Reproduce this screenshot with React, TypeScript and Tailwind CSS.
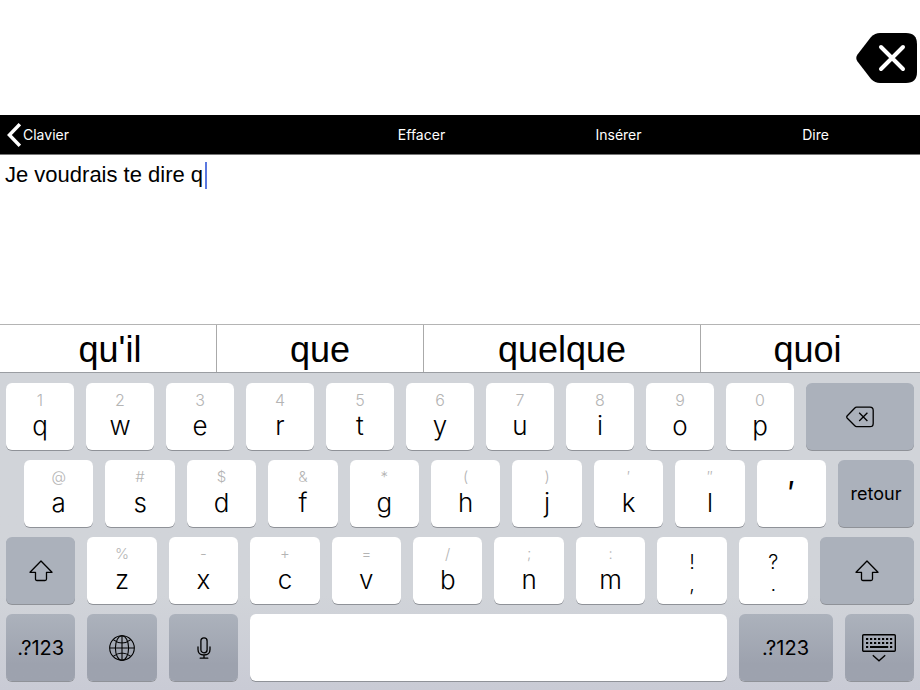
import type { ReactNode } from "react";

type KeyDef = { main: string; alt?: string };

const row1: KeyDef[] = [
  { alt: "1", main: "q" },
  { alt: "2", main: "w" },
  { alt: "3", main: "e" },
  { alt: "4", main: "r" },
  { alt: "5", main: "t" },
  { alt: "6", main: "y" },
  { alt: "7", main: "u" },
  { alt: "8", main: "i" },
  { alt: "9", main: "o" },
  { alt: "0", main: "p" },
];

const row2: KeyDef[] = [
  { alt: "@", main: "a" },
  { alt: "#", main: "s" },
  { alt: "$", main: "d" },
  { alt: "&", main: "f" },
  { alt: "*", main: "g" },
  { alt: "(", main: "h" },
  { alt: ")", main: "j" },
  { alt: "′", main: "k" },
  { alt: "″", main: "l" },
];

const row3: KeyDef[] = [
  { alt: "%", main: "z" },
  { alt: "-", main: "x" },
  { alt: "+", main: "c" },
  { alt: "=", main: "v" },
  { alt: "/", main: "b" },
  { alt: ";", main: "n" },
  { alt: ":", main: "m" },
];

const suggestions = [
  { word: "qu'il", size: "flex-[212] pl-1" },
  { word: "que", size: "flex-[206]" },
  { word: "quelque", size: "flex-[276]" },
  { word: "quoi", size: "flex-[213] pr-1.5" },
];

const keyBase =
  "flex h-[67px] min-w-0 flex-col items-center rounded-md shadow-[0_1px_0_#8f9298]";

function LetterKey({ def, size, small }: { def: KeyDef; size: string; small?: boolean }) {
  return (
    <button type="button" className={`${keyBase} ${size} bg-white pt-2`}>
      <span
        className={`h-[18px] font-light leading-[18px] text-[#b4b4b4] ${small ? "text-[15px]" : "text-base"}`}
      >
        {def.alt}
      </span>
      <span className="text-[26px] font-light leading-[34px] text-black">{def.main}</span>
    </button>
  );
}

function PunctuationKey({ top, bottom }: { top: string; bottom: string }) {
  return (
    <button
      type="button"
      className={`${keyBase} flex-[694] bg-white pt-3.5 text-xl font-light leading-[22px] text-black`}
    >
      <span>{top}</span>
      <span>{bottom}</span>
    </button>
  );
}

function ActionKey({
  size,
  label,
  lower,
  children,
}: {
  size: string;
  label?: string;
  lower?: boolean;
  children: ReactNode;
}) {
  return (
    <button
      type="button"
      aria-label={label}
      className={`${keyBase} ${size} justify-center text-black ${
        lower ? "bg-linear-to-b from-[#acb2bc] to-[#9da2ae] to-75%" : "bg-[#abb1bb]"
      }`}
    >
      {children}
    </button>
  );
}

function ShiftIcon() {
  return (
    <svg width="24" height="22" viewBox="0 0 24 22" fill="none" stroke="black" strokeWidth="1.3" strokeLinejoin="round">
      <path d="M12 1 L23 12.3 H17.5 V19 Q17.5 20.5 16 20.5 H8 Q6.5 20.5 6.5 19 V12.3 H1 Z" />
    </svg>
  );
}

function DeleteIcon() {
  return (
    <svg width="28" height="22" viewBox="0 0 28 22" fill="none" stroke="black" strokeWidth="1.3" strokeLinejoin="round">
      <path d="M10.5 1.2 H24 Q27.2 1.2 27.2 4.4 V17.4 Q27.2 20.6 24 20.6 H10.5 Q9.6 20.6 8.8 19.8 L1.3 12.2 Q0.2 11 1.3 9.8 L8.8 2 Q9.6 1.2 10.5 1.2 Z" />
      <path d="M13.2 6.8 L21.4 15 M21.4 6.8 L13.2 15" />
    </svg>
  );
}

function GlobeIcon() {
  return (
    <svg width="26" height="26" viewBox="0 0 26 26" fill="none" stroke="black" strokeWidth="1.1">
      <circle cx="13" cy="13" r="12.3" />
      <ellipse cx="13" cy="13" rx="6.6" ry="12.3" />
      <path d="M13 0.7 V25.3 M0.7 13 H25.3 M4.2 4.6 Q13 11.4 21.8 4.6 M4.2 21.4 Q13 14.6 21.8 21.4" />
    </svg>
  );
}

function MicIcon() {
  return (
    <svg width="14" height="22" viewBox="0 0 14 22" fill="none" stroke="black" strokeWidth="1.3" strokeLinecap="round">
      <rect x="3.9" y="0.8" width="6.2" height="15" rx="3.1" />
      <path d="M1 10 V12.5 Q1 18 7 18 Q13 18 13 12.5 V10 M7 18 V21 M3.2 21.2 H10.8" />
    </svg>
  );
}

function HideKeyboardIcon() {
  const keys = [4, 8, 12, 16, 20, 24, 28];
  return (
    <svg width="34" height="28" viewBox="0 0 34 28" fill="none" stroke="black">
      <rect x="0.7" y="0.7" width="32.6" height="16.6" rx="1" strokeWidth="1.4" />
      <g fill="black" stroke="none">
        {keys.map((x) => (
          <rect key={`a${x}`} x={x} y="4" width="2.2" height="2" />
        ))}
        {keys.map((x) => (
          <rect key={`b${x}`} x={x} y="8" width="2.2" height="2" />
        ))}
        <rect x="4" y="12" width="2.2" height="2" />
        <rect x="8" y="12" width="18.2" height="2" />
        <rect x="28" y="12" width="2.2" height="2" />
      </g>
      <path d="M10.8 21.3 L17 26.8 L23.2 21.3" strokeWidth="1.4" />
    </svg>
  );
}

export default function App() {
  return (
    <div className="flex min-h-screen flex-col bg-white font-['Inter','Liberation_Sans',sans-serif] text-black">
      <header className="flex h-[115px] items-center justify-end pr-[3px]">
        <button type="button" aria-label="Supprimer">
          <svg width="61" height="50" viewBox="0 0 61 50">
            <path
              d="M24 0 H50 Q61 0 61 11 V39 Q61 50 50 50 H24 Q19 50 15 46 L1.5 28.5 Q-1 25 1.5 21.5 L15 4 Q19 0 24 0 Z"
              fill="black"
            />
            <path d="M25 14 L47 36 M47 14 L25 36" stroke="white" strokeWidth="4" strokeLinecap="round" />
          </svg>
        </button>
      </header>

      <nav className="flex h-10 items-center border-b border-[#777] bg-black text-sm text-white">
        <div className="flex-[316] pl-[7px]">
          <button type="button" className="flex items-center gap-0.5">
            <svg width="14" height="24" viewBox="0 0 14 24" fill="none" stroke="white" strokeWidth="3.4">
              <path d="M12.8 1.2 L2.4 12 L12.8 22.8" />
            </svg>
            Clavier
          </button>
        </div>
        <button type="button" className="flex-[197]">Effacer</button>
        <button type="button" className="flex-[197]">Insérer</button>
        <button type="button" className="flex-[197]">Dire</button>
        <div className="flex-[6]" />
      </nav>

      <main className="relative flex flex-1 flex-col">
        <textarea
          aria-label="Message"
          defaultValue="Je voudrais te dire q"
          className="w-full flex-1 resize-none bg-transparent px-[5px] pt-2 font-['Liberation_Sans',Arial,sans-serif] text-[22px] leading-6 outline-none"
        />
        <span className="absolute left-[205px] top-[7px] h-[27px] w-0.5 bg-[#5a78e0]" />
      </main>

      <div className="flex h-[49px] divide-x divide-[#aaa] border-y border-t-[#b4b4b4] border-b-[#9a9da2] font-['Liberation_Sans',Arial,sans-serif] text-4xl">
        {suggestions.map((s) => (
          <button key={s.word} type="button" className={`${s.size} min-w-0 pt-0.5`}>
            {s.word}
          </button>
        ))}
      </div>

      <section
        aria-label="Clavier"
        className="flex flex-col gap-2.5 bg-linear-to-b from-[#d1d4d9] from-70% to-[#c9cbd5] px-1.5 pb-[9px] pt-2.5"
      >
        <div className="flex gap-3">
          {row1.map((k) => (
            <LetterKey key={k.main} def={k} size="flex-[68]" />
          ))}
          <ActionKey size="flex-[108]" label="Retour arrière">
            <DeleteIcon />
          </ActionKey>
        </div>

        <div className="flex gap-3 pl-[18px]">
          {row2.map((k) => (
            <LetterKey key={k.main} def={k} size="flex-[694]" small />
          ))}
          <button type="button" className={`${keyBase} flex-[694] bg-white pt-3.5 text-[32px] leading-10`}>
            ′
          </button>
          <ActionKey size="flex-[760]">
            <span className="text-lg">retour</span>
          </ActionKey>
        </div>

        <div className="flex gap-3">
          <ActionKey size="flex-[694]" label="Majuscule">
            <ShiftIcon />
          </ActionKey>
          {row3.map((k) => (
            <LetterKey key={k.main} def={k} size="flex-[694]" small />
          ))}
          <PunctuationKey top="!" bottom="," />
          <PunctuationKey top="?" bottom="." />
          <ActionKey size="flex-[940]" label="Majuscule">
            <ShiftIcon />
          </ActionKey>
        </div>

        <div className="flex gap-3">
          <ActionKey size="flex-[694]" lower>
            <span className="text-xl">.?123</span>
          </ActionKey>
          <ActionKey size="flex-[694]" label="Langue" lower>
            <GlobeIcon />
          </ActionKey>
          <ActionKey size="flex-[694]" label="Dictée" lower>
            <MicIcon />
          </ActionKey>
          <button type="button" aria-label="Espace" className={`${keyBase} flex-[4760] bg-white`} />
          <ActionKey size="flex-[940]" lower>
            <span className="text-xl">.?123</span>
          </ActionKey>
          <ActionKey size="flex-[694]" label="Masquer le clavier" lower>
            <HideKeyboardIcon />
          </ActionKey>
        </div>
      </section>
    </div>
  );
}
